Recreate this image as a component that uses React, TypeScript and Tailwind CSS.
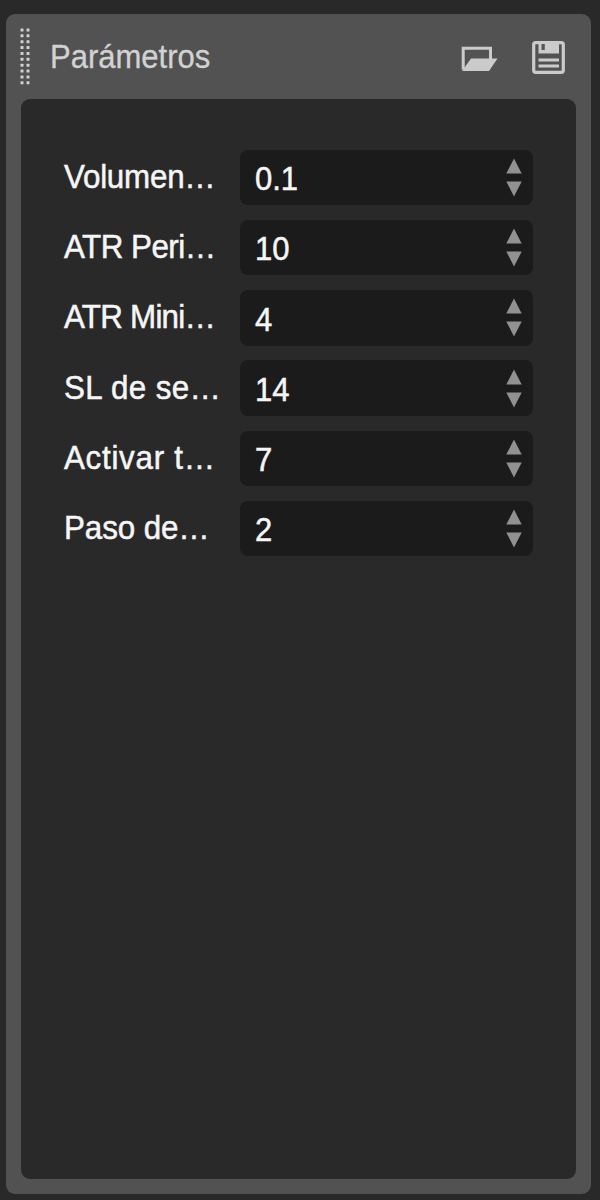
import { useState } from 'react';

const params = [
  { label: 'Volumen…', value: '0.1', step: 0.1, tracking: 'tracking-[-0.25px]' },
  { label: 'ATR Peri…', value: '10', step: 1, tracking: 'tracking-[-0.55px]' },
  { label: 'ATR Mini…', value: '4', step: 1, tracking: 'tracking-[-0.8px]' },
  { label: 'SL de se…', value: '14', step: 1, tracking: 'tracking-[0.4px]' },
  { label: 'Activar t…', value: '7', step: 1, tracking: 'tracking-[0.75px]' },
  { label: 'Paso de…', value: '2', step: 1, tracking: 'tracking-[-0.1px]' },
];

function Grip() {
  return (
    <svg className="-ml-px h-[58px] w-[11px] shrink-0" viewBox="0 0 11 58" fill="#d0d0d0">
      {Array.from({ length: 10 }, (_, i) => (
        <g key={i}>
          <rect x="0.5" y={0.5 + i * 5.87} width="3" height="3" rx="0.5" />
          <rect x="6.5" y={0.5 + i * 5.87} width="3" height="3" rx="0.5" />
        </g>
      ))}
    </svg>
  );
}

function FolderIcon() {
  return (
    <svg className="mt-[3px] h-[26px] w-[37px]" viewBox="0 0 37 26">
      <path d="M2.2 23.5V2.2h27.3v12" fill="none" stroke="#cbcbcb" strokeWidth="3" />
      <path d="M10 12.5H36.5L28 25H1Z" fill="#cbcbcb" />
    </svg>
  );
}

function SaveIcon() {
  return (
    <svg className="h-[33px] w-[33px]" viewBox="0 0 33 33">
      <rect x="1.7" y="1.7" width="29.6" height="29.6" rx="2" fill="none" stroke="#cbcbcb" strokeWidth="3.2" />
      <path d="M6.5 2h20.5v10.5H6.5Z" fill="#cbcbcb" />
      <rect x="9.5" y="3" width="3.3" height="6" fill="#555" />
      <path d="M6.5 19h20.5M6.5 25h20.5" stroke="#cbcbcb" strokeWidth="2.9" />
    </svg>
  );
}

type FieldProps = { label: string; initial: string; step: number };

function NumberField({ label, initial, step }: FieldProps) {
  const [value, setValue] = useState(initial);

  const change = (delta: number) => {
    setValue(String(Number((Number(value) + delta).toFixed(2))));
  };

  return (
    <div className="flex h-[55.5px] w-[292.5px] items-center justify-between rounded-lg bg-[#1b1b1b] pr-[11px] pl-[15px]">
      <span className="origin-left scale-x-[0.94] pt-[2.5px] text-[33px] leading-none text-[#f6f6f6] [-webkit-text-stroke:0.5px_#f6f6f6]">
        {value}
      </span>
      <div className="flex flex-col gap-[7px]">
        <button type="button" aria-label={`${label} +`} onClick={() => change(step)}>
          <svg className="block h-4 w-4" viewBox="0 0 16 16">
            <path d="M8 0.5L15.7 15.5H0.3Z" fill="#919191" />
          </svg>
        </button>
        <button type="button" aria-label={`${label} -`} onClick={() => change(-step)}>
          <svg className="block h-4 w-4" viewBox="0 0 16 16">
            <path d="M0.3 0.5H15.7L8 15.5Z" fill="#919191" />
          </svg>
        </button>
      </div>
    </div>
  );
}

export default function App() {
  return (
    <div className="h-[1200px] w-[600px] overflow-hidden bg-[#292929] pt-[14px] pl-[6px] font-['Liberation_Sans',Arial,sans-serif]">
      <div className="flex h-[1180px] w-[585.4px] flex-col rounded-[9px] bg-[#525252] px-[15px] pb-[15px]">
        <header className="flex h-[85px] shrink-0 items-center pr-[11.5px]">
          <Grip />
          <h1 className="ml-[19px] origin-left scale-x-[0.94] text-[33px] leading-none text-[#d2d2d2] [-webkit-text-stroke:0.3px_#d2d2d2]">
            Parámetros
          </h1>
          <div className="ml-auto flex items-center gap-[34px] pt-[1.5px]">
            <FolderIcon />
            <SaveIcon />
          </div>
        </header>

        <main className="flex-1 rounded-[9px] bg-[#292929] pt-[50.5px] pl-[43px]">
          <div className="flex flex-col gap-[14.8px]">
            {params.map((p) => (
              <div key={p.label} className="flex items-center">
                <span className="w-[176px] shrink-0 origin-left scale-x-[0.95] whitespace-nowrap pb-[2px] text-[33px] leading-none text-[#f6f6f6] [-webkit-text-stroke:0.5px_#f6f6f6]">
                  <span className={p.tracking}>{p.label}</span>
                </span>
                <NumberField label={p.label} initial={p.value} step={p.step} />
              </div>
            ))}
          </div>
        </main>
      </div>
    </div>
  );
}
